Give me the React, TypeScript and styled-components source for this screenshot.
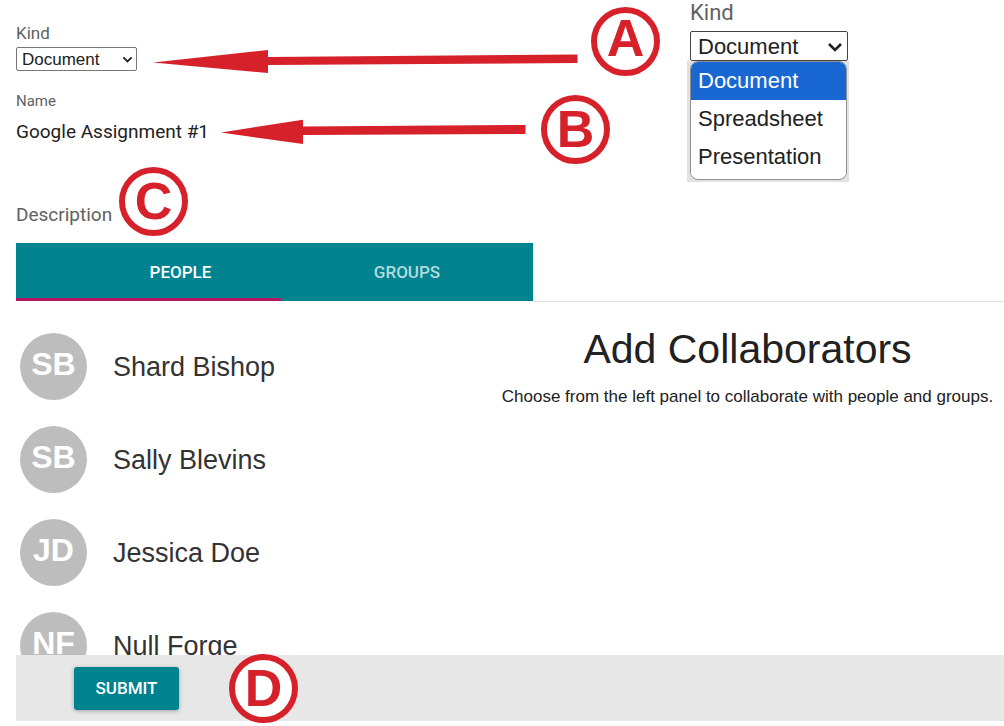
import React, { useState } from 'react';
import styled, { createGlobalStyle } from 'styled-components';

const red = '#d6212b';
const teal = '#00838f';
const sans = '"Liberation Sans", Arial, sans-serif';
const roboto = 'Roboto, "Liberation Sans", sans-serif';

const GlobalStyle = createGlobalStyle`
  * { box-sizing: border-box; }
  body { margin: 0; background: #fff; color: #212121; font-family: ${roboto}; }
`;

const Page = styled.main`
  position: relative;
  display: flex;
  flex-direction: column;
  height: 100vh;
  min-height: 480px;
  padding: 0 0 5px 16px;
  overflow: hidden;
`;

const Top = styled.div`
  display: grid;
  grid-template-columns: 671fr 317fr;
  flex: none;
`;

const Form = styled.form`
  display: flex;
  flex-direction: column;
  align-items: flex-start;
  padding: 23px 0 18px;
`;

const Label = styled.label<{ $size: number }>`
  color: #616161;
  font-size: ${p => p.$size}px;
  line-height: 20px;
`;

const SelectBox = styled.div<{ $large?: boolean }>`
  position: relative;
  width: ${p => (p.$large ? 158 : 121)}px;
  height: ${p => (p.$large ? 30 : 24)}px;

  svg {
    position: absolute;
    right: ${p => (p.$large ? 5 : 4)}px;
    top: ${p => (p.$large ? 11 : 9)}px;
    width: ${p => (p.$large ? 16 : 11)}px;
    pointer-events: none;
  }
`;

const SelectSpacer = styled.div`
  margin-top: 4px;
`;

const Select = styled.select<{ $large?: boolean }>`
  appearance: none;
  display: block;
  width: 100%;
  height: 100%;
  margin: 0;
  padding: 0 ${p => (p.$large ? 7 : 5)}px;
  border: 1px solid ${p => (p.$large ? '#444' : '#767676')};
  border-radius: 2px;
  background: #fff;
  color: #212121;
  font: ${p => (p.$large ? 22 : 17)}px ${sans};
`;

const NameField = styled.div`
  display: flex;
  flex-direction: column;
  width: 200px;
  margin: 20px 0 62px;
`;

const NameInput = styled.input`
  width: 100%;
  height: 24px;
  margin-top: 8px;
  padding: 0;
  border: 0;
  background: transparent;
  color: #212121;
  font: 19px ${roboto};
`;

const MenuPanel = styled.div`
  display: flex;
  flex-direction: column;
  align-items: flex-start;
`;

const MenuLabel = styled.label`
  margin-bottom: 5px;
  padding: 0 3px;
  color: #616161;
  font-size: 22px;
  line-height: 26px;
`;

const MenuSelect = styled.div`
  padding-left: 3px;
`;

const MenuBackdrop = styled.div`
  width: 162px;
  padding: 0 2px 2px 3px;
  background: #e2e2e2;
`;

const Menu = styled.ul`
  width: 157px;
  margin: 0;
  padding: 0 0 3px;
  overflow: hidden;
  list-style: none;
  border: 1px solid #8f8f8f;
  border-radius: 8px;
  background: #fff;
`;

const MenuItem = styled.li<{ $active?: boolean }>`
  height: 38px;
  padding-left: 7px;
  background: ${p => (p.$active ? '#1967d2' : '#fff')};
  color: ${p => (p.$active ? '#fff' : '#212121')};
  font: 22px/38px ${sans};
`;

const TabRow = styled.div`
  display: grid;
  grid-template-columns: 517fr 471fr;
  flex: none;
`;

const Tabs = styled.div`
  display: grid;
  grid-template-columns: 265fr 252fr;
  height: 58px;
  background: ${teal};
`;

const Tab = styled.button<{ $active: boolean; $inset?: boolean }>`
  padding: 3px 0 0 ${p => (p.$inset ? 64 : 0)}px;
  border: 0;
  border-bottom: 3px solid ${p => (p.$active ? '#b5175e' : 'transparent')};
  background: none;
  color: ${p => (p.$active ? '#fff' : '#b2dade')};
  font: 500 17px ${roboto};
  cursor: pointer;
`;

const Rule = styled.div`
  margin-bottom: -1px;
  border-bottom: 1px solid #e0e0e0;
`;

const Body = styled.div`
  display: grid;
  grid-template-columns: 475fr 513fr;
  flex: 1;
  min-height: 0;
`;

const People = styled.ul`
  display: flex;
  flex-direction: column;
  gap: 26px;
  margin: 0;
  padding: 32px 0 0 4px;
  overflow: hidden;
  list-style: none;
`;

const Person = styled.li`
  display: flex;
  flex: none;
  align-items: center;
  gap: 26px;
  color: #333;
  font: 27px/32px ${sans};
`;

const Avatar = styled.span`
  display: flex;
  align-items: center;
  justify-content: center;
  width: 67px;
  height: 67px;
  padding-bottom: 4px;
  border-radius: 50%;
  background: #bdbdbd;
  color: #fff;
  font: bold 32px ${sans};
`;

const Collaborators = styled.section`
  padding-top: 24px;
  text-align: center;
  font-family: ${sans};
`;

const Title = styled.h1`
  margin: 0 0 12px;
  font-size: 41px;
  font-weight: 400;
  line-height: 48px;
`;

const Hint = styled.p`
  margin: 0;
  font-size: 17px;
  line-height: 24px;
  white-space: nowrap;
`;

const Footer = styled.footer`
  display: flex;
  align-items: center;
  flex: none;
  height: 66px;
  padding-left: 58px;
  background: #e7e7e7;
`;

const Submit = styled.button`
  width: 105px;
  height: 43px;
  border: 0;
  border-radius: 3px;
  background: ${teal};
  box-shadow: 0 1px 4px rgba(0, 0, 0, 0.3);
  color: #fff;
  font: 500 17px ${roboto};
  cursor: pointer;
`;

const Badge = styled.span<{ $x: number; $y: number; $raised?: boolean }>`
  position: absolute;
  left: ${p => p.$x}px;
  top: ${p => p.$y}px;
  display: flex;
  align-items: center;
  justify-content: center;
  width: 69px;
  height: 69px;
  padding-bottom: ${p => (p.$raised ? 8 : 2)}px;
  border: 6px solid ${red};
  border-radius: 50%;
  background: #fff;
  color: ${red};
  font: bold 52px/52px ${sans};
`;

const Arrows = styled.svg`
  position: absolute;
  left: 0;
  top: 0;
  pointer-events: none;
`;

const people = [
  { initials: 'SB', name: 'Shard Bishop' },
  { initials: 'SB', name: 'Sally Blevins' },
  { initials: 'JD', name: 'Jessica Doe' },
  { initials: 'NF', name: 'Null Forge' },
];

const kinds = ['Document', 'Spreadsheet', 'Presentation'];

const Chevron = () => (
  <svg viewBox="0 0 16 10" fill="none" stroke="#212121" strokeWidth="2.6" aria-hidden="true">
    <path d="M2 2l6 6 6-6" />
  </svg>
);

function KindSelect({ id, large, value, onChange }: {
  id: string; large?: boolean; value: string; onChange: (v: string) => void;
}) {
  return (
    <SelectBox $large={large}>
      <Select id={id} $large={large} value={value} onChange={e => onChange(e.target.value)}>
        {kinds.map(k => <option key={k}>{k}</option>)}
      </Select>
      <Chevron />
    </SelectBox>
  );
}

export default function App() {
  const [kind, setKind] = useState('Document');
  const [name, setName] = useState('Google Assignment #1');
  const [tab, setTab] = useState('people');

  return (
    <>
      <GlobalStyle />
      <Page>
        <Top>
          <Form onSubmit={e => e.preventDefault()}>
            <Label $size={17} htmlFor="kind">Kind</Label>
            <SelectSpacer>
              <KindSelect id="kind" value={kind} onChange={setKind} />
            </SelectSpacer>
            <NameField>
              <Label $size={15} htmlFor="name">Name</Label>
              <NameInput id="name" value={name} onChange={e => setName(e.target.value)} />
            </NameField>
            <Label as="span" $size={19}>Description</Label>
          </Form>
          <MenuPanel>
            <MenuLabel htmlFor="kind-open">Kind</MenuLabel>
            <MenuSelect>
              <KindSelect id="kind-open" large value={kind} onChange={setKind} />
            </MenuSelect>
            <MenuBackdrop>
              <Menu>
                {kinds.map(k => <MenuItem key={k} $active={k === kind}>{k}</MenuItem>)}
              </Menu>
            </MenuBackdrop>
          </MenuPanel>
        </Top>

        <TabRow>
          <Tabs role="tablist">
            <Tab role="tab" $inset $active={tab === 'people'} onClick={() => setTab('people')}>PEOPLE</Tab>
            <Tab role="tab" $active={tab === 'groups'} onClick={() => setTab('groups')}>GROUPS</Tab>
          </Tabs>
          <Rule />
        </TabRow>

        <Body>
          <People>
            {people.map(p => (
              <Person key={p.name}>
                <Avatar>{p.initials}</Avatar>
                {p.name}
              </Person>
            ))}
          </People>
          <Collaborators>
            <Title>Add Collaborators</Title>
            <Hint>Choose from the left panel to collaborate with people and groups.</Hint>
          </Collaborators>
        </Body>

        <Footer>
          <Submit type="button">SUBMIT</Submit>
        </Footer>

        <Arrows width="600" height="150" fill={red} aria-hidden="true">
          <path d="M153 62.5L268 50V57L577.5 54.5V63L268 65V73Z" />
          <path d="M221 132.5L303 119.7V126.5L525.5 125V134L303 135V144Z" />
        </Arrows>
        <Badge $x={591} $y={7} $raised>A</Badge>
        <Badge $x={541} $y={95}>B</Badge>
        <Badge $x={119} $y={167}>C</Badge>
        <Badge $x={229} $y={654}>D</Badge>
      </Page>
    </>
  );
}
